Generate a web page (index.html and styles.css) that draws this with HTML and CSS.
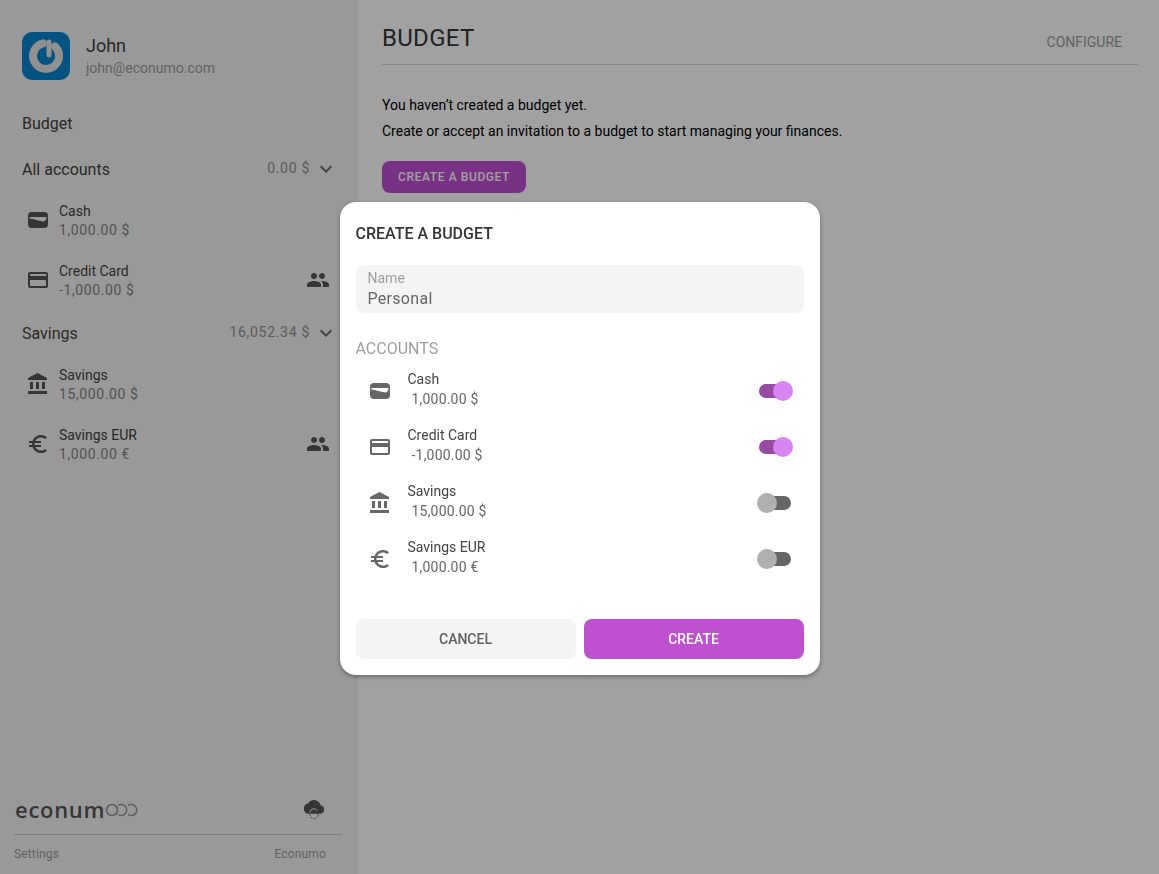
FILE: index.html
```html
<!DOCTYPE html>
<html lang="en">
<head>
  <meta charset="UTF-8">
  <title>Econumo - Budget</title>
  <meta name="viewport" content="width=device-width, initial-scale=1.0">
  <link rel="stylesheet" href="styles.css">
</head>
<body>

<svg class="icon-defs" width="0" height="0" aria-hidden="true">
  <symbol id="i-cash" viewBox="0 0 24 24">
    <path fill-rule="evenodd" d="M6 4h12a4 4 0 0 1 4 4v8a4 4 0 0 1-4 4H6a4 4 0 0 1-4-4V8a4 4 0 0 1 4-4zM3.500 9v1.500c4.500.3 9 2.500 13.500 3 2.200 0 3.500-2 3.500-4.500z"/>
  </symbol>
  <symbol id="i-card" viewBox="0 0 24 24">
    <path d="M20 4H4c-1.11 0-1.99.89-1.99 2L2 18c0 1.11.89 2 2 2h16c1.11 0 2-.89 2-2V6c0-1.11-.89-2-2-2zm0 14H4v-6h16v6zm0-10H4V6h16v2z"/>
  </symbol>
  <symbol id="i-bank" viewBox="0 0 24 24">
    <path d="M4 10v7h3v-7H4zm6 0v7h3v-7h-3zM2 22h19v-3H2v3zm14-12v7h3v-7h-3zm-4.500-9L2 6v2h19V6l-9.500-5z"/>
  </symbol>
  <symbol id="i-euro" viewBox="0 0 24 24">
    <path d="M15 18.500c-2.510 0-4.680-1.420-5.760-3.500H15v-2H8.580c-.05-.33-.08-.66-.08-1s.03-.67.08-1H15V9H9.240C10.320 6.920 12.500 5.500 15 5.500c1.610 0 3.090.59 4.230 1.570L21 5.300C19.410 3.870 17.300 3 15 3c-3.920 0-7.240 2.510-8.480 6H3v2h3.060c-.04.33-.06.66-.06 1s.02.67.06 1H3v2h3.520c1.240 3.490 4.560 6 8.480 6 2.310 0 4.410-.87 6-2.300l-1.780-1.770c-1.130.98-2.600 1.570-4.220 1.570z"/>
  </symbol>
  <symbol id="i-people" viewBox="0 0 24 24">
    <path d="M16 11c1.660 0 2.990-1.340 2.990-3S17.660 5 16 5c-1.660 0-3 1.340-3 3s1.340 3 3 3zm-8 0c1.660 0 2.990-1.340 2.990-3S9.660 5 8 5C6.340 5 5 6.340 5 8s1.340 3 3 3zm0 2c-2.330 0-7 1.170-7 3.500V19h14v-2.500c0-2.330-4.670-3.500-7-3.500zm8 0c-.29 0-.62.02-.97.05 1.160.84 1.970 1.970 1.970 3.450V19h6v-2.500c0-2.330-4.670-3.500-7-3.500z"/>
  </symbol>
  <symbol id="i-chevron" viewBox="0 0 24 24">
    <path d="M16.590 8.590 12 13.170 7.410 8.590 6 10l6 6 6-6z"/>
  </symbol>
</svg>

<div class="app">
  <aside class="sidebar">
    <div class="user">
      <div class="avatar">
        <svg width="48" height="48" viewBox="0 0 48 48">
          <path class="avatar-ring" d="M33 14.500a13 13 0 1 1-12-3.200"/>
          <path class="avatar-ring avatar-stem" d="M27 10v13"/>
        </svg>
      </div>
      <div>
        <div class="user-name">John</div>
        <div class="user-email">john@econumo.com</div>
      </div>
    </div>

    <div class="nav-link">Budget</div>

    <div class="group-head">
      <span class="group-name">All accounts</span>
      <span class="group-sum">0.00 $</span>
      <svg class="chevron"><use href="#i-chevron"/></svg>
    </div>
    <div class="acc">
      <svg class="acc-icon"><use href="#i-cash"/></svg>
      <div class="acc-text">
        <div class="acc-name">Cash</div>
        <div class="acc-sum">1,000.00 $</div>
      </div>
    </div>
    <div class="acc">
      <svg class="acc-icon"><use href="#i-card"/></svg>
      <div class="acc-text">
        <div class="acc-name">Credit Card</div>
        <div class="acc-sum">-1,000.00 $</div>
      </div>
      <svg class="shared"><use href="#i-people"/></svg>
    </div>

    <div class="group-head group-head-next">
      <span class="group-name">Savings</span>
      <span class="group-sum">16,052.34 $</span>
      <svg class="chevron"><use href="#i-chevron"/></svg>
    </div>
    <div class="acc">
      <svg class="acc-icon"><use href="#i-bank"/></svg>
      <div class="acc-text">
        <div class="acc-name">Savings</div>
        <div class="acc-sum">15,000.00 $</div>
      </div>
    </div>
    <div class="acc">
      <svg class="acc-icon"><use href="#i-euro"/></svg>
      <div class="acc-text">
        <div class="acc-name">Savings EUR</div>
        <div class="acc-sum">1,000.00 €</div>
      </div>
      <svg class="shared"><use href="#i-people"/></svg>
    </div>

    <div class="side-foot">
      <div class="brand-row">
        <div class="brand">
          <span class="brand-text">econum</span>
          <svg class="brand-rings" width="34" height="14" viewBox="0 0 34 14">
            <circle cx="7" cy="7" r="5.500"/>
            <path d="M13 2.500a5.500 5.500 0 1 1 0 9"/>
            <path d="M23 2.500a5.500 5.500 0 1 1 0 9"/>
          </svg>
        </div>
        <svg class="sync" width="22" height="24" viewBox="0 0 24 26">
          <path d="M19.350 8.040C18.670 4.590 15.640 2 12 2 9.110 2 6.600 3.640 5.350 6.040 2.340 6.360 1 8.910 1 11.500c0 3 2 5.500 5 5.500h13c2.760 0 4-2.240 4-4.500 0-2.640-1.050-4.280-3.650-4.460z"/>
          <path class="sync-arc" d="M7.500 16a4.500 4.500 0 0 1 8.500-2"/>
          <circle class="sync-dash" cx="12" cy="18" r="4.500"/>
        </svg>
      </div>
      <div class="foot-links">
        <span>Settings</span>
        <span>Econumo</span>
      </div>
    </div>
  </aside>

  <main class="content">
    <header class="page-head">
      <h1>BUDGET</h1>
      <span class="configure">CONFIGURE</span>
    </header>
    <p class="note">You haven’t created a budget yet.</p>
    <p class="note">Create or accept an invitation to a budget to start managing your finances.</p>
    <button class="btn-create-budget" type="button">CREATE A BUDGET</button>
  </main>
</div>

<div class="backdrop">
  <div class="dialog">
    <div class="dialog-title">CREATE A BUDGET</div>
    <div class="field">
      <label class="field-label" for="budgetName">Name</label>
      <input class="field-input" id="budgetName" type="text" value="Personal">
    </div>
    <div class="section-label">ACCOUNTS</div>
    <div class="pick-list">
      <div class="pick">
        <svg class="pick-icon"><use href="#i-cash"/></svg>
        <div class="pick-text">
          <div class="pick-name">Cash</div>
          <div class="pick-sum">1,000.00 $</div>
        </div>
        <span class="toggle on"></span>
      </div>
      <div class="pick">
        <svg class="pick-icon"><use href="#i-card"/></svg>
        <div class="pick-text">
          <div class="pick-name">Credit Card</div>
          <div class="pick-sum">-1,000.00 $</div>
        </div>
        <span class="toggle on"></span>
      </div>
      <div class="pick">
        <svg class="pick-icon"><use href="#i-bank"/></svg>
        <div class="pick-text">
          <div class="pick-name">Savings</div>
          <div class="pick-sum">15,000.00 $</div>
        </div>
        <span class="toggle"></span>
      </div>
      <div class="pick">
        <svg class="pick-icon"><use href="#i-euro"/></svg>
        <div class="pick-text">
          <div class="pick-name">Savings EUR</div>
          <div class="pick-sum">1,000.00 €</div>
        </div>
        <span class="toggle"></span>
      </div>
    </div>
    <div class="dialog-actions">
      <button class="btn btn-cancel" type="button">CANCEL</button>
      <button class="btn btn-create" type="button">CREATE</button>
    </div>
  </div>
</div>

</body>
</html>
```

FILE: styles.css
```css
* {
  box-sizing: border-box;
}
html, body {
  height: 100%;
}
body {
  margin: 0;
  overflow: hidden;
  font-family: Roboto, "Liberation Sans", sans-serif;
  background-color: #fff;
  color: #424242;
}
.icon-defs {
  position: absolute;
}
.app {
  display: flex;
  height: 100%;
}

/* sidebar */
.sidebar {
  display: flex;
  flex-direction: column;
  width: 358px;
  flex-shrink: 0;
  padding: 32px 20px 0 22px;
  background-color: #f3f3f3;
}
.user {
  display: flex;
  align-items: center;
  gap: 16px;
  height: 48px;
}
.avatar {
  width: 48px;
  height: 48px;
  border-radius: 10px;
  background-color: #0482cf;
}
.avatar svg {
  display: block;
}
.avatar-ring {
  fill: none;
  stroke: #e4e4e4;
  stroke-width: 8;
  stroke-linecap: round;
}
.avatar-stem {
  stroke-width: 5;
}
.user-name {
  font-size: 18px;
  line-height: 24px;
}
.user-email {
  font-size: 14px;
  line-height: 20px;
  color: #9a9a9a;
}
.nav-link {
  margin-top: 32px;
  font-size: 16px;
  line-height: 24px;
}
.group-head {
  display: flex;
  align-items: center;
  height: 24px;
  margin-top: 21px;
}
.group-head-next {
  margin-top: 11px;
}
.group-name {
  flex: 1;
  font-size: 16px;
}
.group-sum {
  margin-top: -2px;
  font-size: 14px;
  letter-spacing: .7px;
  color: #8f8f8f;
}
.chevron {
  width: 24px;
  height: 24px;
  margin: 0 0 0 4px;
  fill: #6a6a6a;
}
.acc {
  display: flex;
  align-items: center;
  height: 60px;
}
.group-head + .acc {
  margin-top: 9px;
}
.acc-icon {
  width: 24px;
  height: 24px;
  margin: 0 9px 0 4px;
  fill: #555;
}
.acc-text {
  flex: 1;
  padding-top: 1px;
}
.acc-name {
  font-size: 14px;
  line-height: 18px;
}
.acc-sum {
  margin-top: 1px;
  font-size: 14px;
  line-height: 19px;
  letter-spacing: .6px;
  color: #828282;
}
.shared {
  width: 24px;
  height: 24px;
  margin-right: 8px;
  fill: #555;
}
.side-foot {
  margin: auto -4px 0 -8px;
}
.brand-row {
  display: flex;
  align-items: center;
  justify-content: space-between;
  height: 24px;
  padding: 0 17px 0 1px;
}
.brand {
  display: flex;
  align-items: center;
}
.brand-text {
  margin-top: -2px;
  font-family: "Open Sans", sans-serif;
  font-size: 22px;
  font-weight: 600;
  line-height: 24px;
  letter-spacing: .7px;
  color: #555;
}
.brand-rings {
  fill: none;
  stroke: #8f8f8f;
  stroke-width: 1.500;
}
.sync path {
  fill: #555;
}
.sync .sync-arc {
  fill: none;
  stroke: #f3f3f3;
  stroke-width: 1;
}
.sync-dash {
  fill: none;
  stroke: #555;
  stroke-width: 1;
  stroke-dasharray: 2 1;
}
.foot-links {
  display: flex;
  justify-content: space-between;
  height: 40px;
  margin-top: 12px;
  padding: 11px 16px 0 0;
  border-top: 1px solid #c4c4c4;
  font-size: 12px;
  line-height: 16px;
  letter-spacing: .15px;
  color: #9a9a9a;
}

/* main */
.content {
  flex: 1;
  padding: 0 21px 0 24px;
}
.page-head {
  display: flex;
  align-items: center;
  justify-content: space-between;
  height: 65px;
  margin-bottom: 30px;
  padding-right: 16px;
  border-bottom: 1px solid #d8d8d8;
}
.page-head h1 {
  margin: 12px 0 0;
  font-size: 24px;
  font-weight: 400;
  letter-spacing: .3px;
  color: #363636;
}
.configure {
  margin-top: 20px;
  font-size: 14px;
  color: #9a9a9a;
}
.note {
  margin: 0 0 6px;
  font-size: 14px;
  line-height: 20px;
  color: #000;
}
.btn-create-budget {
  display: block;
  width: 144px;
  height: 32px;
  margin-top: 20px;
  border: none;
  border-radius: 8px;
  background-color: #bf50d0;
  font-family: inherit;
  font-size: 12px;
  font-weight: 500;
  letter-spacing: .6px;
  color: #fff;
}

/* dialog */
.backdrop {
  position: fixed;
  inset: 0;
  display: flex;
  align-items: center;
  justify-content: center;
  padding-top: 3px;
  background-color: rgba(0,0,0,.37);
}
.dialog {
  width: 480px;
  padding: 16px;
  border-radius: 16px;
  background-color: #fff;
  box-shadow: 0 2px 5px rgba(0,0,0,.35);
}
.dialog-title {
  height: 30px;
  margin-bottom: 17px;
  font-size: 16px;
  font-weight: 500;
  line-height: 32px;
  color: #333;
}
.field {
  height: 48px;
  padding: 5px 12px 0;
  border-radius: 8px;
  background-color: #f4f4f4;
}
.field-label {
  display: block;
  font-size: 14px;
  line-height: 16px;
  color: #9e9e9e;
}
.field-input {
  display: block;
  width: 100%;
  height: 24px;
  padding: 0;
  border: none;
  outline: none;
  background: transparent;
  font-family: inherit;
  font-size: 16px;
  letter-spacing: .3px;
  color: #666;
}
.section-label {
  margin-top: 24px;
  font-size: 16px;
  line-height: 24px;
  color: #9e9e9e;
}
.pick-list {
  margin-top: 2px;
}
.pick {
  display: flex;
  align-items: center;
  height: 56px;
  padding-left: 12px;
}
.pick-icon {
  width: 24px;
  height: 24px;
  margin-right: 16px;
  fill: #666;
}
.pick-text {
  flex: 1;
  padding-bottom: 3px;
}
.pick-name {
  font-size: 14px;
  line-height: 19px;
  color: #444;
}
.pick-sum {
  margin: 1px 0 0 4px;
  font-size: 14px;
  line-height: 19px;
  letter-spacing: .2px;
  color: #666;
}
.toggle {
  position: relative;
  width: 32px;
  height: 14px;
  margin-right: 13px;
  border-radius: 7px;
  background-color: #666;
}
.toggle::after {
  content: "";
  position: absolute;
  top: -3px;
  left: -2px;
  width: 20px;
  height: 20px;
  border-radius: 50%;
  background-color: #b0b0b0;
}
.toggle.on {
  background-color: #964ba2;
}
.toggle.on::after {
  left: 14px;
  background-color: #d884f2;
}
.dialog-actions {
  display: flex;
  gap: 8px;
  margin-top: 32px;
}
.btn {
  flex: 1;
  height: 40px;
  border: none;
  border-radius: 8px;
  font-family: inherit;
  font-size: 14px;
  font-weight: 500;
}
.btn-cancel {
  background-color: #f4f4f4;
  color: #616161;
}
.btn-create {
  background-color: #bf50d0;
  color: #fff;
}
```
